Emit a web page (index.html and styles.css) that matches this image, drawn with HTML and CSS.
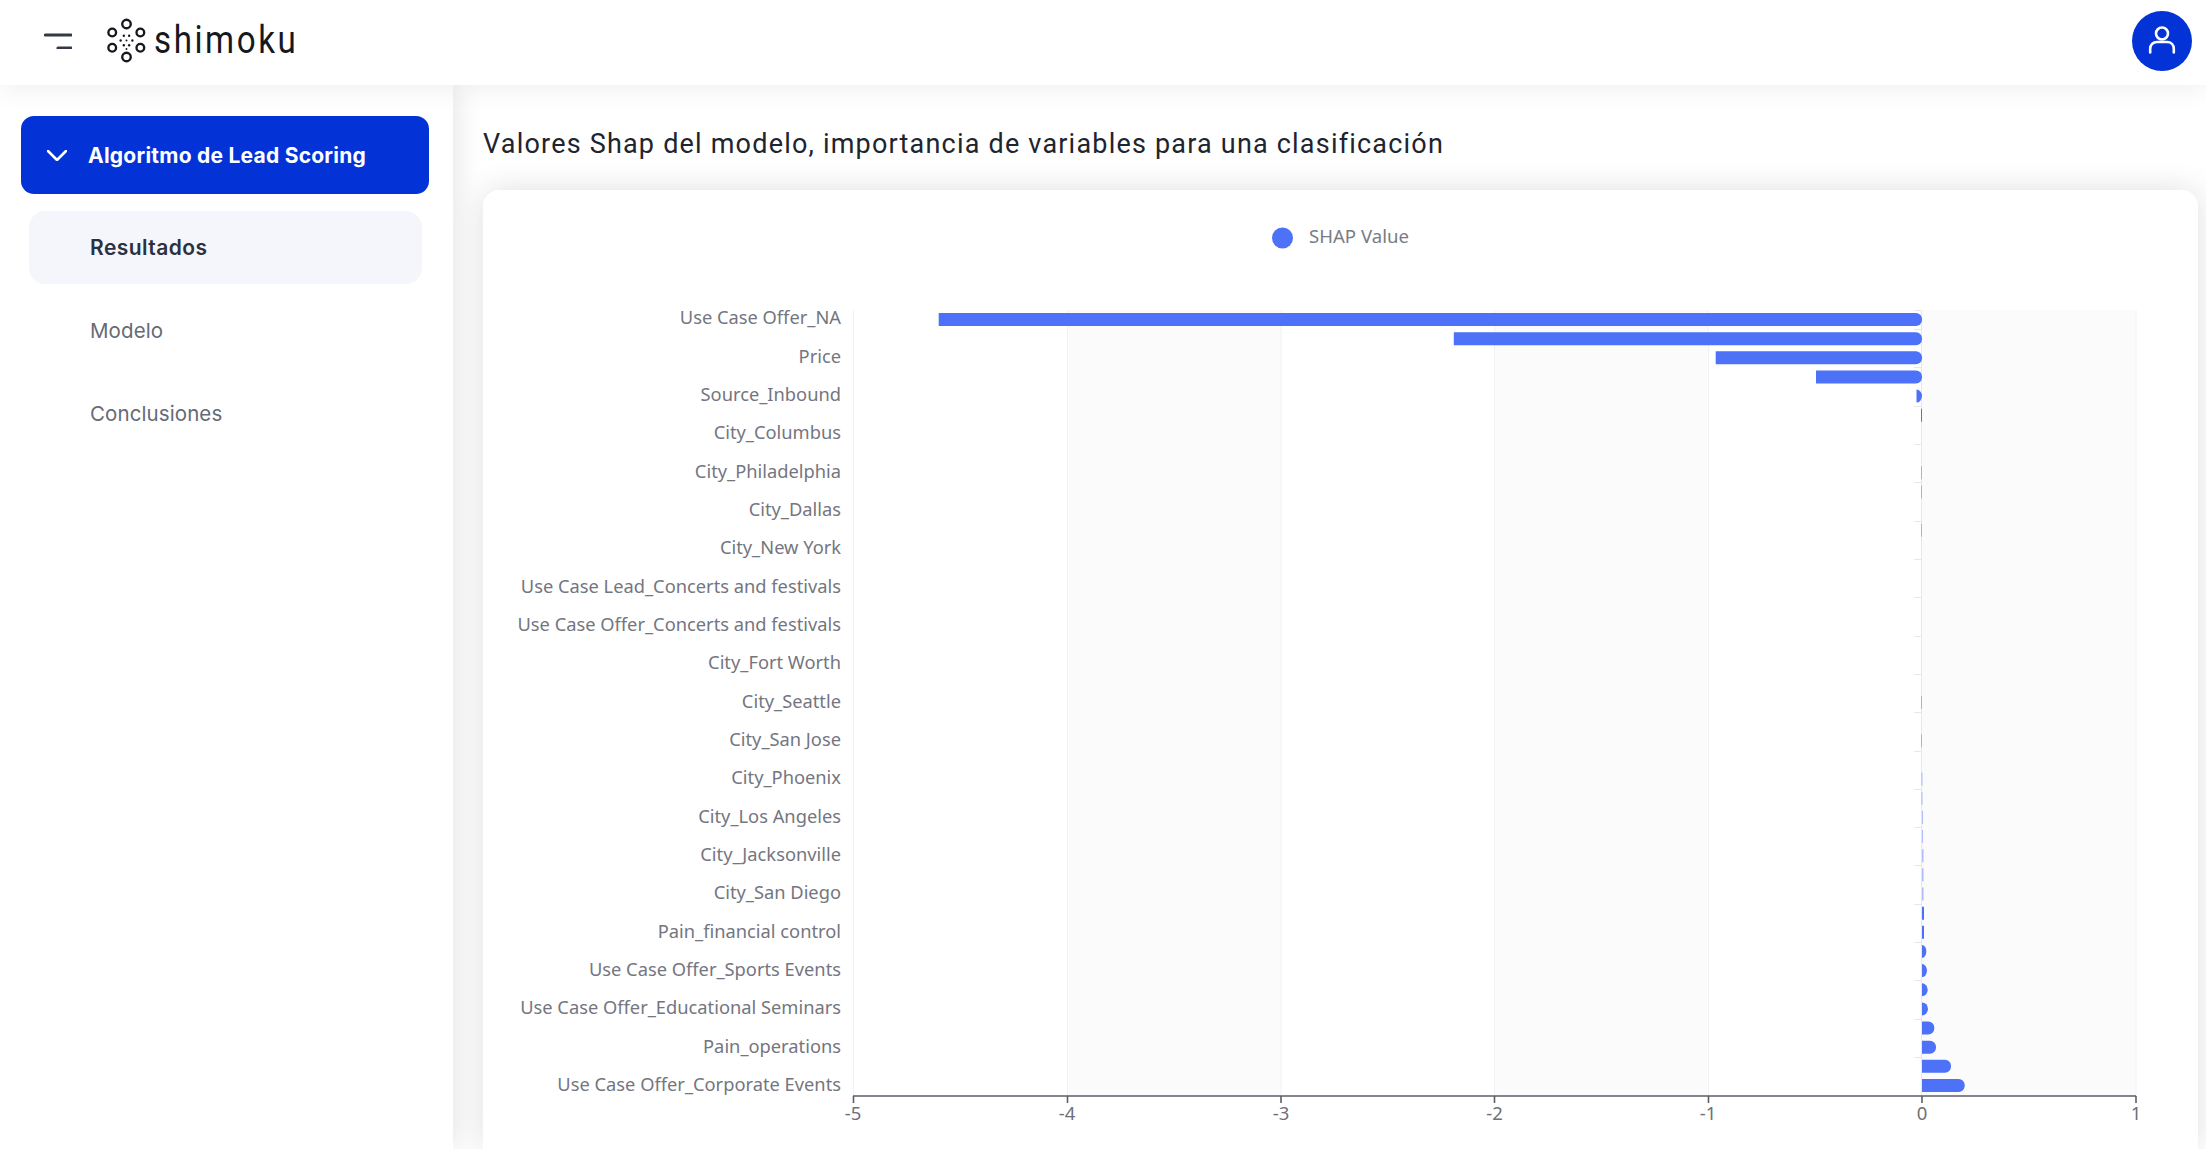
FILE: index.html
```html
<!DOCTYPE html>
<html lang="es">
<head>
<meta charset="utf-8">
<title>Shimoku</title>
<link rel="stylesheet" href="styles.css">
</head>
<body>
<header class="topbar">
  <div class="brand">
    <button class="menu-btn" aria-label="menu">
      <svg width="28" height="16" viewBox="0 0 28 16"><path class="menu-line" d="M1.5 2H27M14 15H27"/></svg>
    </button>
    <svg class="logo-mark" width="49" height="49" viewBox="0 0 46 46">
      <g class="logo-ring">
        <circle cx="23" cy="7.5" r="4"/><circle cx="23" cy="38.5" r="4"/>
        <circle cx="9.6" cy="15.5" r="3.6"/><circle cx="9.6" cy="29.8" r="3.6"/>
        <circle cx="36" cy="15.5" r="3.6"/><circle cx="36" cy="29.8" r="3.6"/>
      </g>
      <g class="logo-dot">
        <circle cx="20.5" cy="18.5" r="1.1"/><circle cx="25.5" cy="18.5" r="1.1"/>
        <circle cx="17.5" cy="23" r="1.1"/><circle cx="23" cy="23" r=".9"/><circle cx="28.5" cy="23" r="1.1"/>
        <circle cx="20.5" cy="27.5" r="1.1"/><circle cx="25.5" cy="27.5" r="1.1"/>
        <circle cx="23" cy="31" r=".9"/>
      </g>
    </svg>
    <span class="wordmark">shimoku</span>
  </div>
  <div class="avatar">
    <svg width="30" height="30" viewBox="0 0 30 30"><path class="avatar-line" d="M3.2 26.5v-3.7c0-4 2.8-6.8 6.8-6.8h10c4 0 6.8 2.8 6.8 6.8v3.7"/><circle class="avatar-line" cx="15" cy="7.5" r="6"/></svg>
  </div>
</header>
<div class="layout">
  <aside class="sidebar">
    <div class="group-head">
      <svg width="20" height="11" viewBox="0 0 20 11"><path class="chev" d="M1 1l9 9 9-9"/></svg>
      <span>Algoritmo de Lead Scoring</span>
    </div>
    <nav class="subnav">
      <a class="subitem active">Resultados</a>
      <a class="subitem">Modelo</a>
      <a class="subitem">Conclusiones</a>
    </nav>
  </aside>
  <main class="content">
    <h1 class="page-title">Valores Shap del modelo, importancia de variables para una clasificación</h1>
    <section class="card">
      <svg class="chart" viewBox="483 190 1715 959" width="1715" height="959">
        <g class="bands">
          <rect x="1067" y="310" width="214" height="786"/>
          <rect x="1494.5" y="310" width="213.5" height="786"/>
          <rect x="1922" y="310" width="214" height="786"/>
        </g>
        <path class="gridlines" d="M853.5 310V1096M1067.5 310V1096M1281 310V1096M1494.5 310V1096M1708.5 310V1096M2136 310V1096"/>
        <path class="yaxis" d="M1921.5 310V1096M1914 310.5H1921M1914 329.5H1921M1914 367.5H1921M1914 406.5H1921M1914 444.5H1921M1914 482.5H1921M1914 521.5H1921M1914 559.5H1921M1914 597.5H1921M1914 636.5H1921M1914 674.5H1921M1914 712.5H1921M1914 751.5H1921M1914 789.5H1921M1914 827.5H1921M1914 865.5H1921M1914 904.5H1921M1914 942.5H1921M1914 980.5H1921M1914 1019.5H1921M1914 1057.5H1921"/>
        <g class="bars">
          <path d="M938.7 313H1916a6 6 0 0 1 6 6v1a6 6 0 0 1-6 6H938.7z"/>
          <path d="M1453.8 332.15H1916a6 6 0 0 1 6 6v1a6 6 0 0 1-6 6H1453.8z"/>
          <path d="M1715.7 351.3H1916a6 6 0 0 1 6 6v1a6 6 0 0 1-6 6H1715.7z"/>
          <path d="M1816 370.45H1916a6 6 0 0 1 6 6v1a6 6 0 0 1-6 6H1816z"/>
          <path d="M1916.5 389.6a5.5 6.5 0 0 1 5.5 6.5a5.5 6.5 0 0 1-5.5 6.5z"/>
          <rect x="1921" y="408.75" width="1" height="13"/>
          <path d="M1922 925.8h2v13h-2z" />
          <path d="M1922 906.65h2v13h-2z" />
          <path d="M1922 944.95a4.3 6.5 0 0 1 0 13z"/>
          <path d="M1922 964.1a5 6.5 0 0 1 0 13z"/>
          <path d="M1922 983.25a5.7 6.5 0 0 1 0 13z"/>
          <path d="M1922 1002.4a6 6.5 0 0 1 0 13z"/>
          <path d="M1922 1021.55h6.3a6 6 0 0 1 6 6v1a6 6 0 0 1-6 6H1922z"/>
          <path d="M1922 1040.7h8a6 6 0 0 1 6 6v1a6 6 0 0 1-6 6H1922z"/>
          <path d="M1922 1059.85h23a6 6 0 0 1 6 6v1a6 6 0 0 1-6 6H1922z"/>
          <path d="M1922 1079h36.7a6 6 0 0 1 6 6v1a6 6 0 0 1-6 6H1922z"/>
        </g>
        <g class="bars-faint">
          <rect x="1921" y="466.2" width="1" height="13"/>
          <rect x="1921" y="485.35" width="1" height="13"/>
          <rect x="1921" y="523.65" width="1" height="13"/>
          <rect x="1921" y="696" width="1" height="13"/>
          <rect x="1921" y="734.3" width="1" height="13"/>
          <rect x="1921.5" y="772.6" width="1" height="13"/>
          <rect x="1921.5" y="791.75" width="1" height="13"/>
          <rect x="1922" y="810.9" width="1" height="13"/>
          <rect x="1922" y="830.05" width="1" height="13"/>
          <rect x="1922" y="849.2" width="1.5" height="13"/>
          <rect x="1922" y="868.35" width="1.5" height="13"/>
          <rect x="1922" y="887.5" width="1.5" height="13"/>
        </g>
        <path class="xaxis" d="M853 1096H2136M853.5 1096V1103M1067.5 1096V1103M1281 1096V1103M1494.5 1096V1103M1708.5 1096V1103M1922 1096V1103M2136 1096V1103"/>
        <g class="ylabels">
          <text x="841" y="323.3">Use Case Offer_NA</text>
          <text x="841" y="361.6">Price</text>
          <text x="841" y="400">Source_Inbound</text>
          <text x="841" y="438.3">City_Columbus</text>
          <text x="841" y="476.6">City_Philadelphia</text>
          <text x="841" y="515">City_Dallas</text>
          <text x="841" y="553.3">City_New York</text>
          <text x="841" y="591.6">Use Case Lead_Concerts and festivals</text>
          <text x="841" y="630">Use Case Offer_Concerts and festivals</text>
          <text x="841" y="668.3">City_Fort Worth</text>
          <text x="841" y="706.6">City_Seattle</text>
          <text x="841" y="745">City_San Jose</text>
          <text x="841" y="783.3">City_Phoenix</text>
          <text x="841" y="821.6">City_Los Angeles</text>
          <text x="841" y="860">City_Jacksonville</text>
          <text x="841" y="898.3">City_San Diego</text>
          <text x="841" y="936.6">Pain_financial control</text>
          <text x="841" y="975">Use Case Offer_Sports Events</text>
          <text x="841" y="1013.3">Use Case Offer_Educational Seminars</text>
          <text x="841" y="1051.6">Pain_operations</text>
          <text x="841" y="1090">Use Case Offer_Corporate Events</text>
        </g>
        <g class="xlabels">
          <text x="853" y="1120">-5</text>
          <text x="1067" y="1120">-4</text>
          <text x="1281" y="1120">-3</text>
          <text x="1494.5" y="1120">-2</text>
          <text x="1708" y="1120">-1</text>
          <text x="1922" y="1120">0</text>
          <text x="2136" y="1120">1</text>
        </g>
        <circle class="legend-dot" cx="1282.5" cy="238" r="10.5"/>
        <text class="legend-text" x="1309" y="242.5">SHAP Value</text>
      </svg>
    </section>
  </main>
</div>
</body>
</html>
```
FILE: styles.css
```css
* { box-sizing: border-box; }
html, body { margin: 0; height: 100%; overflow: hidden; background: #fff; }
body { font-family: "Inter", "Roboto", sans-serif; display: flex; flex-direction: column; }

.topbar {
  height: 85px; flex: none; display: flex; align-items: center; justify-content: space-between;
  padding: 0 14px 4px 44px; background: #fff; position: relative; z-index: 3;
  box-shadow: 0 3px 26px rgba(0,0,0,.07);
}
.brand { display: flex; align-items: center; }
.menu-btn { border: 0; background: none; padding: 0; margin: 0 30px 0 0; display: flex; }
.menu-line { fill: none; stroke: #333a47; stroke-width: 3.2; stroke-linecap: round; }
.logo-mark { margin-right: 3px; }
.logo-ring circle { fill: none; stroke: #16181d; stroke-width: 2.2; }
.logo-dot circle { fill: #16181d; }
.wordmark {
  font-family: "Roboto", sans-serif; font-weight: 400; font-size: 39px; letter-spacing: 3px; color: #16181d; line-height: 1;
  transform: scaleX(.85); transform-origin: left center;
}
.avatar { width: 60px; height: 60px; border-radius: 50%; background: #0333d6; display: flex; align-items: center; justify-content: center; }
.avatar-line { fill: none; stroke: #fff; stroke-width: 2.6; stroke-linecap: round; }

.layout { flex: 1; display: flex; min-height: 0; }
.sidebar {
  width: 453px; flex: none; background: #fff; padding: 31px 24px 0 21px; position: relative; z-index: 2;
  box-shadow: 4px 0 26px rgba(0,0,0,.1);
}
.group-head {
  height: 78px; border-radius: 13px; background: #0333d6; color: #fff; display: flex; align-items: center;
  padding-left: 26px; gap: 21px; font-size: 21px; font-weight: 700; letter-spacing: .24px;
}
.chev { fill: none; stroke: #fff; stroke-width: 2.6; stroke-linecap: round; stroke-linejoin: round; }
.subnav { margin: 17px 7px 0 8px; display: flex; flex-direction: column; gap: 10px; }
.subitem { height: 73px; display: flex; align-items: center; padding-left: 61px; font-size: 20.5px; letter-spacing: .1px; color: #666a75; border-radius: 16px; }
.subitem.active { background: #f5f6fb; color: #2b3140; font-weight: 600; font-size: 21px; letter-spacing: .45px; }

.content { flex: 1; min-width: 0; padding: 0 8px 0 30px; background: #fff; }
.page-title { margin: 42px 0 29px; font-family: "Roboto", sans-serif; font-weight: 400; font-size: 27px; line-height: 34px; letter-spacing: 1.2px; color: #20242e; }
.card { background: #fff; border-radius: 16px 16px 0 0; height: 959px; box-shadow: 0 0 32px rgba(0,0,0,.13); overflow: hidden; }
.chart { display: block; }

.bands rect { fill: #fbfbfc; }
.gridlines { fill: none; stroke: #f1f2f6; stroke-width: 1; }
.yaxis { fill: none; stroke: #e6e7ee; stroke-width: 1; }
.bars path, .bars rect { fill: #4d71f7; }
.bars-faint rect { fill: #4d71f7; opacity: .45; }
.xaxis { fill: none; stroke: #5c5f68; stroke-width: 1.6; }
.ylabels { transform: translateY(1px); }
.ylabels text { font-family: "Noto Sans", sans-serif; font-size: 18.3px; fill: #74767f; text-anchor: end; }
.xlabels text { font-family: "Noto Sans", sans-serif; font-size: 18.5px; fill: #6e7079; text-anchor: middle; }
.legend-dot { fill: #4d71f7; }
.legend-text { font-family: "Noto Sans", sans-serif; font-size: 18.6px; fill: #7a7c85; }
```
